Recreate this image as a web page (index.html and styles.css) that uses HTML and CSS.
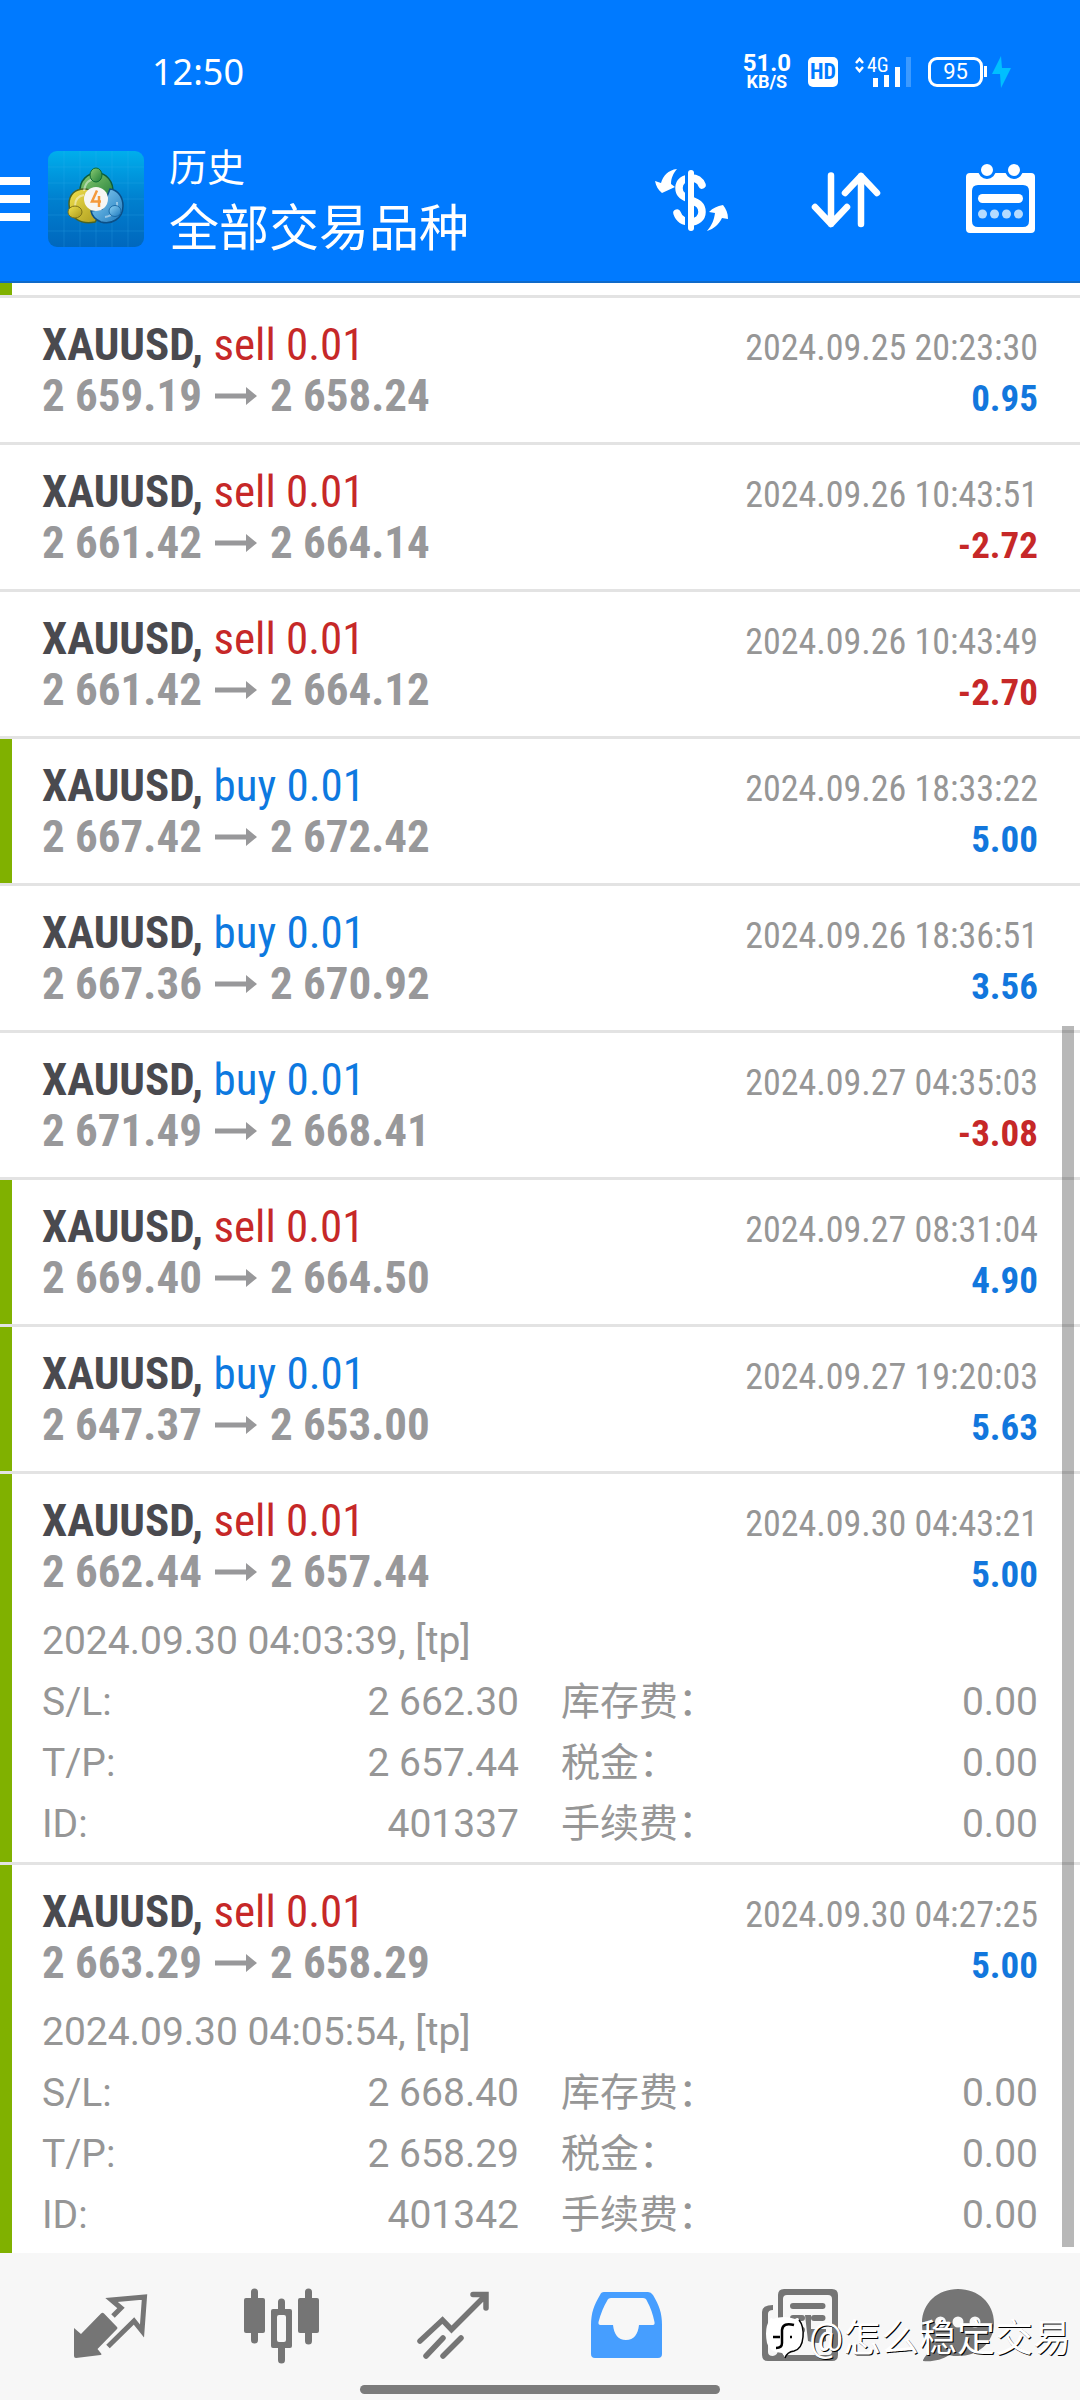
FILE: index.html
```html
<!DOCTYPE html>
<html lang="zh-CN">
<head>
<meta charset="utf-8">
<meta name="viewport" content="width=device-width, initial-scale=1">
<title>历史</title>
<link rel="stylesheet" href="styles.css">
</head>
<body>
<svg class="defs" aria-hidden="true">
  <symbol id="arrow" viewBox="0 0 42 18"><path d="M0 6.5h31V0l11 9-11 9v-6.500H0z"/></symbol>
</svg>
<header class="header">
  <div class="status">
    <time class="clock">12:50</time>
    <div class="indicators">
      <div class="speed"><span class="rate">51.0</span><span class="unit">KB/S</span></div>
      <span class="hd">HD</span>
      <div class="signal">
        <svg viewBox="0 0 56 30" width="56" height="30" aria-hidden="true">
          <path d="M1 6l3.500-4L8 6M1 10l3.500 4L8 10" fill="none" stroke="#fff" stroke-width="2.500"/>
          <g stroke="#fff" stroke-width="5" stroke-linecap="butt"><path d="M20.500 21v9M31.500 18v12M42.500 10v20"/><path d="M53.500 0v30" stroke="#3c9aff"/></g>
        </svg>
        <span class="network">4G</span>
      </div>
      <div class="power">
        <span class="battery">95</span>
        <svg viewBox="0 0 28 32" width="28" height="32" aria-hidden="true"><path d="M2.500 10v11" stroke="#fff" stroke-width="3"/><path d="M18 0L9 18h8l1 14 10-20h-9z" fill="#00bfff"/></svg>
      </div>
    </div>
  </div>
  <div class="toolbar">
    <button class="menu" type="button" aria-label="菜单"><svg viewBox="0 0 30 44" width="30" height="44"><path d="M0 4h30M0 22h30M0 40h30" stroke="#fff" stroke-width="8"/></svg></button>
    <svg class="logo" viewBox="0 0 96 96" width="96" height="96" aria-hidden="true">
      <defs>
        <linearGradient id="bg" x2="0" y2="1"><stop offset="0" stop-color="#00aeec"/><stop offset=".5" stop-color="#0080cf"/><stop offset="1" stop-color="#0067bd"/></linearGradient>
        <linearGradient id="gr" x2="1" y2="1"><stop offset="0" stop-color="#8fce74"/><stop offset="1" stop-color="#1e7d38"/></linearGradient>
        <linearGradient id="ye" x2="1" y2="1"><stop offset="0" stop-color="#f2e24d"/><stop offset="1" stop-color="#a8971c"/></linearGradient>
        <linearGradient id="bl" x2="1" y2="1"><stop offset="0" stop-color="#8fd3f5"/><stop offset="1" stop-color="#1b78bd"/></linearGradient>
      </defs>
      <rect width="96" height="96" rx="9" fill="url(#bg)"/>
      <path d="M16 0v96M32 0v96M48 0v96M64 0v96M80 0v96M0 16h96M0 32h96M0 48h96M0 64h96M0 80h96" stroke="#3bb5ee" stroke-opacity=".2"/>
      <path d="M32 42c-1-13 8-20 17-20s17 8 16 21l-5 7H38z" fill="url(#gr)" stroke="#0c5d3c" stroke-width="1.500"/>
      <path d="M38 38c-11-1-17 6-17 15 0 14 12 21 26 18l7-9-9-22z" fill="url(#ye)" stroke="#4c6422" stroke-width="1.500"/>
      <path d="M62 38c8 1 13 8 13 17 0 13-12 19-22 16-5-2-9-6-10-11l11-2z" fill="url(#bl)" stroke="#0b4f87" stroke-width="1.500"/>
      <path d="M36 40c1-8 5-12 12-12M27 55c0-6 3-10 9-11M69 51c1 8-4 14-12 15" fill="none" stroke="#fff" stroke-opacity=".45" stroke-width="2"/>
      <ellipse cx="48" cy="24" rx="6" ry="7" fill="url(#gr)" stroke="#0c6b35"/>
      <ellipse cx="27" cy="61" rx="7" ry="6" fill="url(#ye)" stroke="#7d7218"/>
      <ellipse cx="67" cy="60" rx="6" ry="5.500" fill="url(#bl)" stroke="#1b6ba8"/>
      <circle cx="48" cy="48" r="12" fill="#f6f6f4"/>
      <path d="M49 39.500l-5 11h9M51 45v11" fill="none" stroke="#f49a3c" stroke-width="2.500"/>
    </svg>
    <h1 class="titles"><span class="title">历史</span><span class="subtitle">全部交易品种</span></h1>
    <div class="actions">
      <button type="button" aria-label="货币"><svg viewBox="0 0 84 84" width="84" height="84">
        <path d="M53 28c-2-5-6-7-11-7-7 0-12 4-12 10 0 7 5 9 12 12s11 5 11 12c0 6-5 10-11 10-7 0-12-3-14-9" fill="none" stroke="#fff" stroke-width="7.500" stroke-linecap="round"/>
        <path d="M37.500 12v62" stroke="#007aff" stroke-width="3"/><path d="M42 16v55" stroke="#fff" stroke-width="6" stroke-linecap="round"/>
        <path d="M6 24l6 2c2-7 7-13 16-14-4 5-6 9-6 15l4 3-13 6c-4-3-6-7-7-12zM58 74c5-6 7-11 8-18l-6-1c4-4 8-6 14-7 3 4 5 8 5 14l-6-1c-3 6-8 11-15 13z" fill="#fff"/>
      </svg></button>
      <button type="button" aria-label="排序"><svg viewBox="0 0 84 84" width="84" height="84"><path d="M27 18.500V67M11 50l16 17 16-17M57 67V19M41 36l16-17 16 17" fill="none" stroke="#fff" stroke-width="6.500" stroke-linecap="round" stroke-linejoin="round"/></svg></button>
      <button type="button" aria-label="日期"><svg viewBox="0 0 84 84" width="84" height="84">
        <path fill="#fff" fill-rule="evenodd" d="M11 16h61q4 0 4 4v52q0 4-4 4H11q-4 0-4-4V20q0-4 4-4zM19 28q-6 0-6 6v30q0 6 6 6h45q6 0 6-6V34q0-6-6-6z"/>
        <g fill="#fff" stroke="#007aff" stroke-width="3"><circle cx="28" cy="13" r="7.500"/><circle cx="55" cy="13" r="7.500"/></g>
        <path d="M23.500 41.500h36" stroke="#fff" stroke-width="9" stroke-linecap="round"/>
        <g fill="#b5dbff"><circle cx="23.500" cy="57" r="4.500"/><circle cx="35.500" cy="57" r="4.500"/><circle cx="47.500" cy="57" r="4.500"/><circle cx="59.500" cy="57" r="4.500"/></g>
      </svg></button>
    </div>
  </div>
</header>

<main class="history">
  <div class="peek tp"></div>
  <ul class="deals">
    <li class="deal">
      <div class="summary"><div class="name"><b>XAUUSD,</b> <span class="sell">sell 0.01</span></div><time>2024.09.25 20:23:30</time>
      <div class="prices">2 659.19<svg class="to"><use href="#arrow"/></svg>2 658.24</div><div class="profit">0.95</div></div>
    </li>
    <li class="deal">
      <div class="summary"><div class="name"><b>XAUUSD,</b> <span class="sell">sell 0.01</span></div><time>2024.09.26 10:43:51</time>
      <div class="prices">2 661.42<svg class="to"><use href="#arrow"/></svg>2 664.14</div><div class="profit loss">-2.72</div></div>
    </li>
    <li class="deal">
      <div class="summary"><div class="name"><b>XAUUSD,</b> <span class="sell">sell 0.01</span></div><time>2024.09.26 10:43:49</time>
      <div class="prices">2 661.42<svg class="to"><use href="#arrow"/></svg>2 664.12</div><div class="profit loss">-2.70</div></div>
    </li>
    <li class="deal tp">
      <div class="summary"><div class="name"><b>XAUUSD,</b> <span class="buy">buy 0.01</span></div><time>2024.09.26 18:33:22</time>
      <div class="prices">2 667.42<svg class="to"><use href="#arrow"/></svg>2 672.42</div><div class="profit">5.00</div></div>
    </li>
    <li class="deal">
      <div class="summary"><div class="name"><b>XAUUSD,</b> <span class="buy">buy 0.01</span></div><time>2024.09.26 18:36:51</time>
      <div class="prices">2 667.36<svg class="to"><use href="#arrow"/></svg>2 670.92</div><div class="profit">3.56</div></div>
    </li>
    <li class="deal">
      <div class="summary"><div class="name"><b>XAUUSD,</b> <span class="buy">buy 0.01</span></div><time>2024.09.27 04:35:03</time>
      <div class="prices">2 671.49<svg class="to"><use href="#arrow"/></svg>2 668.41</div><div class="profit loss">-3.08</div></div>
    </li>
    <li class="deal tp">
      <div class="summary"><div class="name"><b>XAUUSD,</b> <span class="sell">sell 0.01</span></div><time>2024.09.27 08:31:04</time>
      <div class="prices">2 669.40<svg class="to"><use href="#arrow"/></svg>2 664.50</div><div class="profit">4.90</div></div>
    </li>
    <li class="deal tp">
      <div class="summary"><div class="name"><b>XAUUSD,</b> <span class="buy">buy 0.01</span></div><time>2024.09.27 19:20:03</time>
      <div class="prices">2 647.37<svg class="to"><use href="#arrow"/></svg>2 653.00</div><div class="profit">5.63</div></div>
    </li>
    <li class="deal tp open">
      <div class="summary"><div class="name"><b>XAUUSD,</b> <span class="sell">sell 0.01</span></div><time>2024.09.30 04:43:21</time>
      <div class="prices">2 662.44<svg class="to"><use href="#arrow"/></svg>2 657.44</div><div class="profit">5.00</div></div>
      <div class="details">
        <p class="opened">2024.09.30 04:03:39, [tp]</p>
        <dl class="fields">
          <div><dt>S/L:</dt><dd>2 662.30</dd></div><div><dt>库存费：</dt><dd>0.00</dd></div>
          <div><dt>T/P:</dt><dd>2 657.44</dd></div><div><dt>税金：</dt><dd>0.00</dd></div>
          <div><dt>ID:</dt><dd>401337</dd></div><div><dt>手续费：</dt><dd>0.00</dd></div>
        </dl>
      </div>
    </li>
    <li class="deal tp open">
      <div class="summary"><div class="name"><b>XAUUSD,</b> <span class="sell">sell 0.01</span></div><time>2024.09.30 04:27:25</time>
      <div class="prices">2 663.29<svg class="to"><use href="#arrow"/></svg>2 658.29</div><div class="profit">5.00</div></div>
      <div class="details">
        <p class="opened">2024.09.30 04:05:54, [tp]</p>
        <dl class="fields">
          <div><dt>S/L:</dt><dd>2 668.40</dd></div><div><dt>库存费：</dt><dd>0.00</dd></div>
          <div><dt>T/P:</dt><dd>2 658.29</dd></div><div><dt>税金：</dt><dd>0.00</dd></div>
          <div><dt>ID:</dt><dd>401342</dd></div><div><dt>手续费：</dt><dd>0.00</dd></div>
        </dl>
      </div>
    </li>
  </ul>
  <div class="scrollbar"></div>
</main>

<nav class="tabs">
  <button type="button" aria-label="行情"><svg viewBox="0 0 84 84" width="84" height="84"><path d="M6 44l7 6 20-20.500q1.500-1.500 3 0L49 43q1 1 0 2L29.500 65l4 5q0 1-1 1L8 74q-2 0-2-2z" fill="#757575"/><path d="M45 32l8-8-9.500-8 33-3L74 47l-8-10-26 25.500" fill="none" stroke="#757575" stroke-width="5"/></svg></button>
  <button type="button" aria-label="图表"><svg viewBox="0 0 84 84" width="84" height="84"><g fill="#757575"><rect x="4" y="14" width="21" height="35" rx="2"/><rect x="58" y="14" width="21" height="35" rx="2"/><path fill-rule="evenodd" d="M33 25h17q2 0 2 2v35q0 2-2 2H33q-2 0-2-2V27q0-2 2-2zm6 6q-2 0-2 2v23q0 2 2 2h5q2 0 2-2V33q0-2-2-2z"/></g><path d="M14.500 8v48M68.500 8v49M41.500 18v9M41.500 63v13" stroke="#757575" stroke-width="7" stroke-linecap="round"/></svg></button>
  <button type="button" aria-label="交易"><svg viewBox="0 0 84 84" width="84" height="84"><path d="M8 57l22.500-21 9 9.500L73 12M61 10.500h13V24M14 72l17-18M31 72l18-18" fill="none" stroke="#757575" stroke-width="5.500" stroke-linecap="round"/></svg></button>
  <button type="button" aria-label="历史" aria-current="page"><svg viewBox="0 0 84 84" width="84" height="84"><path fill="#469eff" fill-rule="evenodd" d="M20 8h44q3 0 5 3c6 10 9 18 9 30v29q0 4-4 4H11q-4 0-4-4V41c0-12 3-20 9-30q1-3 4-3zM27 14q-3 0-4 3-5 8-8.500 21-.5 3 2 3H29c1 9 5 15 13 15s12-6 13-15h14q2 0 1.500-3Q68 26 63 17q-1-3-4-3z"/></svg></button>
  <button type="button" aria-label="新闻"><svg viewBox="0 0 84 84" width="84" height="84"><path fill="#757575" fill-rule="evenodd" d="M28 5h48q6 0 6 6v60q0 6-6 6H12q-6 0-6-6V28q0-7 11-7v5q-5 0-5 4v38q0 4 5 4 5-1 5-6V11q0-6 6-6zm3 6q-4 0-4 4v56h45q4 0 4-4V15q0-4-4-4z"/><path d="M37 22h29.500M37 34h9M58 34h8.500M37 46h9" stroke="#757575" stroke-width="6" stroke-linecap="round"/><path d="M49 31h6v14h15v12q-8 4-18 0z" fill="#757575"/></svg></button>
  <button type="button" aria-label="消息"><svg class="chat" viewBox="0 0 84 84" width="84" height="84"><path d="M30 5c20 0 36 14 36 34S50 72 30 72c-3 0-6 0-9-1-7 5-17 7-26 6 0-3 5-6 6-14-5-5-7-14-7-24C-6 19 10 5 30 5z" fill="#757575"/><g fill="#f7f7f7"><circle cx="12.500" cy="38" r="5.500"/><circle cx="30" cy="38" r="5.500"/><circle cx="47" cy="38" r="5.500"/></g></svg></button>
  <div class="watermark">
    <svg viewBox="0 0 40 44" width="40" height="44" aria-hidden="true"><path d="M5 3q1-2 3 0 11-4 22 0 4-3 4 2 5 5 5 14 0 15-11 17-5 1-8 6-1-3-3-5Q4 36 2 27-1 12 5 3z" fill="#fff"/><path d="M34 4q5 6 4 17-1 12-9 14-7 1-9 7" fill="none" stroke="#000" stroke-width="1.500"/><path d="M29 9q-11-3-12 5v13q0 5-6 5M8 21h7M25 21h2" fill="none" stroke="#000" stroke-width="2.500"/></svg>
    <span>@怎么稳定交易</span>
  </div>
  <div class="home"></div>
</nav>
</body>
</html>
```
FILE: styles.css
```css
* { box-sizing: border-box; }
body, h1, p, ul, dl, dd { margin: 0; }
body {
  background: #fff;
  color: #969696;
  font-family: Roboto, "Noto Sans CJK SC", sans-serif;
  font-size: 39px;
}
button { padding: 0; border: 0; background: none; cursor: pointer; }
svg { display: block; }
.defs { display: none; }

.header { background: #007aff; border-bottom: 2px solid #0f6ac9; color: #fff; }
.status {
  display: flex;
  justify-content: space-between;
  align-items: center;
  height: 120px;
  padding: 24px 69px 0 152px;
}
.clock { font-family: "Noto Sans", sans-serif; font-size: 36px; line-height: 50px; }
.indicators { display: flex; align-items: center; gap: 17px; }
.speed {
  display: flex;
  flex-direction: column;
  align-items: center;
  font-weight: 700;
}
.rate { font-size: 24px; line-height: 20px; }
.unit { font-size: 18px; line-height: 18px; }
.hd {
  width: 30px;
  border-radius: 5px;
  background: #fff;
  color: #007aff;
  font: 700 22px/30px "Roboto Condensed", Roboto, sans-serif;
  text-align: center;
}
.signal { position: relative; }
.network {
  position: absolute;
  top: -2px;
  left: 12px;
  font: 20px/20px "Roboto Condensed", Roboto, sans-serif;
}
.power { display: flex; align-items: center; }
.battery {
  width: 55px;
  border: 3px solid #fff;
  border-radius: 9px;
  font-size: 22px;
  line-height: 24px;
  text-align: center;
}

.toolbar { display: flex; align-items: center; padding: 16px 37px 19px 0; }
.logo { margin-left: 18px; }
.titles { display: flex; flex-direction: column; flex: 1; margin-left: 25px; padding-top: 4px; font-weight: 400; }
.title { font-size: 38px; line-height: 56px; }
.subtitle { font-size: 50px; line-height: 66px; }
.actions { display: flex; gap: 71px; }

.history { position: relative; }
.peek { height: 12px; }
.deals { padding: 0; list-style: none; }
.deal { border-top: 3px solid #e3e3e3; padding: 21px 42px; }
.open { padding-bottom: 7px; }
.tp {
  background: linear-gradient(#80b100, #80b100) left / 12px 100% no-repeat;
  background-clip: padding-box;
}
.summary {
  display: grid;
  grid-template-columns: 1fr auto;
  grid-auto-rows: 51px;
  align-items: baseline;
  font-family: "Roboto Condensed", Roboto, sans-serif;
}
.name, .prices { font-size: 45px; line-height: 51px; }
.name b { color: #4a4a4f; }
.sell { color: #c62828; }
.buy { color: #0d79e0; }
.prices { display: flex; align-items: center; gap: 13px; color: #98989a; font-weight: 700; }
.to { width: 42px; height: 18px; fill: #98989a; }
.summary time, .profit { line-height: 42px; text-align: right; }
.summary time { font-size: 36px; }
.profit { color: #1277dd; font-size: 37px; font-weight: 700; }
.loss { color: #c62828; }
.details { margin-top: 14px; line-height: 61px; }
.fields { display: grid; grid-template-columns: 1fr 1fr; column-gap: 42px; }
.fields div { display: flex; justify-content: space-between; height: 61px; }
.scrollbar {
  position: absolute;
  right: 6px;
  bottom: 6px;
  width: 12px;
  height: 62%;
  background: rgba(0, 0, 0, .28);
}

.tabs {
  position: relative;
  display: grid;
  grid-template-columns: repeat(6, 1fr);
  justify-items: center;
  padding: 31px 24px 32px;
  background: #f7f7f7;
}
.chat { overflow: visible; }
.watermark {
  position: absolute;
  right: 9px;
  bottom: 36px;
  display: flex;
  align-items: center;
  gap: 4px;
  color: #fff;
  font-size: 38px;
  line-height: 52px;
  text-shadow: 1px 1px 0 #000;
}
.home {
  position: absolute;
  left: 33.333%;
  right: 33.333%;
  bottom: 6px;
  height: 9px;
  border-radius: 5px;
  background: #7b7b7b;
}
```
